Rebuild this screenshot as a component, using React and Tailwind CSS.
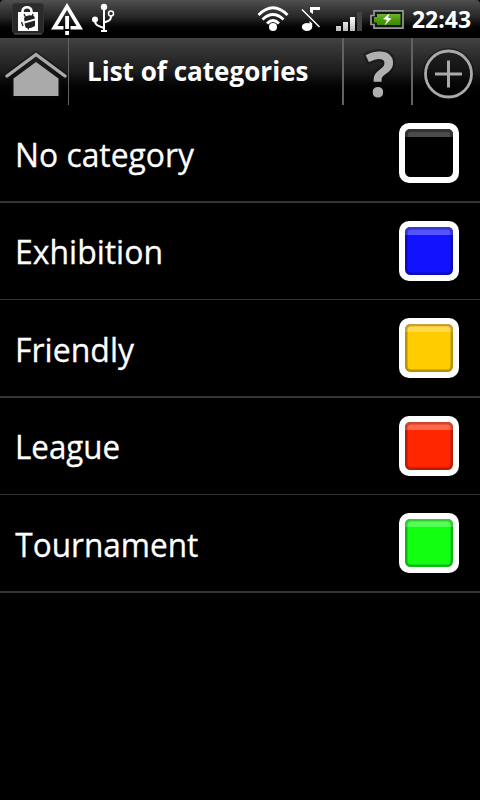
const rows = [
  { name: "No category", x: 0, y: 62, width: 179, fill: "#000000", edge: "#000000", shine: "#4b4b4b", edgeShine: "#333333", line: "h-0.5" },
  { name: "Exhibition", x: 0, y: 61, width: 148, fill: "#1212ff", edge: "#0c0cb8", shine: "#5454ff", edgeShine: "#3838c8", line: "h-px" },
  { name: "Friendly", x: 0, y: 62, width: 119, fill: "#ffcc00", edge: "#b89308", shine: "#ffd94e", edgeShine: "#c4a235", line: "h-0.5" },
  { name: "League", x: 0, y: 61, width: 105, fill: "#ff2600", edge: "#b81c04", shine: "#ff674c", edgeShine: "#c84832", line: "h-px" },
  { name: "Tournament", x: 0.3, y: 62, width: 183, fill: "#12ff12", edge: "#0cb814", shine: "#54ff54", edgeShine: "#38c83c", line: "h-0.5" },
];

function Label({ children, x = 0, width, y, size, weight, height, stroke = 0 }) {
  return (
    <svg width={width + 4} height={height} className="shrink-0 overflow-visible">
      <text x={x} y={y} fontSize={size} fontWeight={weight} textLength={width} lengthAdjust="spacingAndGlyphs" fill="#fff" stroke="#fff" strokeWidth={stroke}>
        {children}
      </text>
    </svg>
  );
}

function Swatch({ row }) {
  return (
    <svg width="60" height="60" viewBox="0 0 60 60" className="shrink-0">
      <rect width="60" height="60" rx="10" fill="#fff" />
      <rect x="6" y="6" width="48" height="48" rx="5.5" fill={row.edge} />
      <path d="M6 14V11.500Q6 6 11.500 6H48.500Q54 6 54 11.500V14Z" fill={row.edgeShine} />
      <rect x="8.500" y="8.500" width="43" height="43" rx="3.500" fill={row.fill} />
      <path d="M8.500 14V12Q8.500 8.500 12 8.500H48Q51.500 8.500 51.500 12V14Z" fill={row.shine} />
    </svg>
  );
}

function StatusBar() {
  return (
    <div className="flex h-[38px] w-full bg-linear-to-b from-[#505050] via-[#262626] via-45% to-black to-90%">
      <svg width="480" height="38" viewBox="0 0 480 38">
        <defs>
          <linearGradient id="bag" x1="0" y1="0" x2="0" y2="1">
            <stop offset="0" stopColor="#2c2c2c" />
            <stop offset="1" stopColor="#262626" />
          </linearGradient>
          <linearGradient id="bars" x1="0" y1="0" x2="0" y2="1">
            <stop offset="0" stopColor="#fff" />
            <stop offset="1" stopColor="#bbb" />
          </linearGradient>
          <linearGradient id="cell" x1="0" y1="0" x2="0" y2="1">
            <stop offset="0" stopColor="#6db52c" />
            <stop offset="0.5" stopColor="#4c9d0c" />
            <stop offset="1" stopColor="#3f8608" />
          </linearGradient>
        </defs>
        <path d="M0 0H4Q0 0 0 4ZM480 0H476Q480 0 480 4Z" fill="#000" />
        {/* Market bag */}
        <rect x="12.500" y="3.500" width="31" height="30" rx="3" fill="url(#bag)" stroke="#333" />
        <path d="M14 34H42" stroke="#5a5a5a" />
        <path d="M18 12H38V31H18Z" fill="#fff" />
        <path d="M22.500 14V11.500C22.500 5.800 31.500 5.800 31.500 11.500V14" fill="none" stroke="#fff" strokeWidth="2.600" />
        <path d="M24 18Q27 14 34 16L35 18.500L24.500 21.500ZM24.500 23.500L35 20.500V26Q29 29.500 25.500 27.500Z" fill="#222" />
        <path d="M24 14L26 18M33 14L32 17M21.500 22L23 26M28 27L28.500 29.500" stroke="#222" strokeWidth="1.300" />
        {/* Warning triangle */}
        <path d="M67 3L83 29.500H70.500V26H76.500L67 10L57.500 26H63.500V29.500H51Z" fill="#fff" />
        <path d="M65.200 16H69V29H65.200ZM65.200 31H69V35H65.200Z" fill="#fff" />
        {/* USB trident */}
        <g fill="none" stroke="#fff" strokeWidth="2">
          <path d="M104 7V30M95 20V21C95 25 98 26 104 28M104 22.500C110 20.500 111 20 111 16" />
          <circle cx="111" cy="13.500" r="2.500" strokeWidth="1.500" />
        </g>
        <circle cx="104" cy="7" r="3.200" fill="#fff" />
        <circle cx="95" cy="19.500" r="3" fill="#fff" />
        <path d="M101 30H107V32H101Z" fill="#fff" />
        {/* Wi-Fi */}
        <g fill="none" stroke="#fff" strokeWidth="2.800">
          <path d="M258.500 15Q273 0.500 287.500 15M262.500 19.500Q273 9.500 283.500 19.500M267 23.500Q273 17.500 279 23.500" />
        </g>
        <circle cx="273" cy="27" r="4" fill="#fff" />
        {/* Muted note */}
        <path d="M302 9.500L319.500 27" stroke="#fff" strokeWidth="1.500" />
        <path d="M310 7H320V10H313V14L310 12Z" fill="#fff" />
        <path d="M309.500 21L312.200 23.500V27H309.500Z" fill="#fff" />
        <ellipse cx="307" cy="27" rx="5.200" ry="4" fill="#fff" />
        {/* Signal */}
        <path d="M336 26H341V31H336ZM343 22H348V31H343ZM350 17H355V31H350Z" fill="url(#bars)" />
        <path d="M357 12H362V31H357Z" fill="#444" />
        {/* Battery */}
        <path d="M374 10.800H403V28.200H374V24.500H371V15.500H374Z" fill="#151515" stroke="#999" strokeWidth="1.700" />
        <path d="M377 14H400.500V25H377V22.500H374V17H377Z" fill="url(#cell)" />
        <path d="M389.500 13.500L383 19L387 20L384.500 25.500L391.500 18.500L388 17.800Z" fill="#fff" />
        <text x="412" y="28" fontSize="23" fontWeight="700" textLength="59" lengthAdjust="spacingAndGlyphs" fill="#fff">22:43</text>
      </svg>
    </div>
  );
}

export default function App() {
  return (
    <main className="flex h-[800px] w-[480px] flex-col overflow-hidden bg-black font-['Open_Sans','Noto_Sans',sans-serif] text-white">
      <StatusBar />
      <header className="flex h-[67px] shrink-0 bg-linear-to-b from-[#424242] via-[#1c1c1c] via-50% to-black to-90%">
        <div className="w-[69px] border-r border-[#626262]">
          <svg width="68" height="67" viewBox="0 0 68 67">
            <path d="M7 38L36 16.500L65 38M36 24L58.500 40.500V58H13.500V40.500Z" fill="none" stroke="#0c0c0c" strokeWidth="7" strokeLinejoin="round" opacity=".4" />
            <path d="M7 38L36 16.500L65 38" fill="none" stroke="#aaa" strokeWidth="3.400" strokeLinecap="round" />
            <path d="M36 24L58.500 40.500V58H13.500V40.500Z" fill="#aaa" />
          </svg>
        </div>
        <div className="w-[273px] pl-[18px]">
          <Label width={221.5} height={67} y={43} size={26.5} weight={700}>List of categories</Label>
        </div>
        <div className="w-[69px] border-l-2 border-[#626262]">
          <svg width="67" height="67" viewBox="0 0 67 67" className="overflow-visible">
            <text x="21.500" y="58.500" fontSize="63" fontWeight="700" textLength="29" lengthAdjust="spacingAndGlyphs" fill="#b0b0b0" stroke="#0c0c0c" strokeOpacity=".4" strokeWidth="5" strokeLinejoin="round" paintOrder="stroke">?</text>
          </svg>
        </div>
        <div className="w-[69px] border-l-2 border-[#626262]">
          <svg width="67" height="67" viewBox="0 0 67 67">
            <circle cx="35.500" cy="36" r="26" fill="#080808" opacity=".4" />
            <circle cx="35.500" cy="36" r="23" fill="none" stroke="#aaa" strokeWidth="2.800" />
            <path d="M35.500 22.500V49.500M22 36H49" stroke="#aaa" strokeWidth="3" />
          </svg>
        </div>
      </header>
      <ul>
        {rows.map((row) => (
          <li key={row.name}>
            <div className="flex h-24 justify-between pr-[21px] pl-[15px]">
              <Label x={row.x} width={row.width} height={96} y={row.y} size={33} weight={400} stroke={0.3}>{row.name}</Label>
              <div className="pt-[18px]"><Swatch row={row} /></div>
            </div>
            <div className={`${row.line} bg-[#333333]`} />
          </li>
        ))}
      </ul>
    </main>
  );
}
